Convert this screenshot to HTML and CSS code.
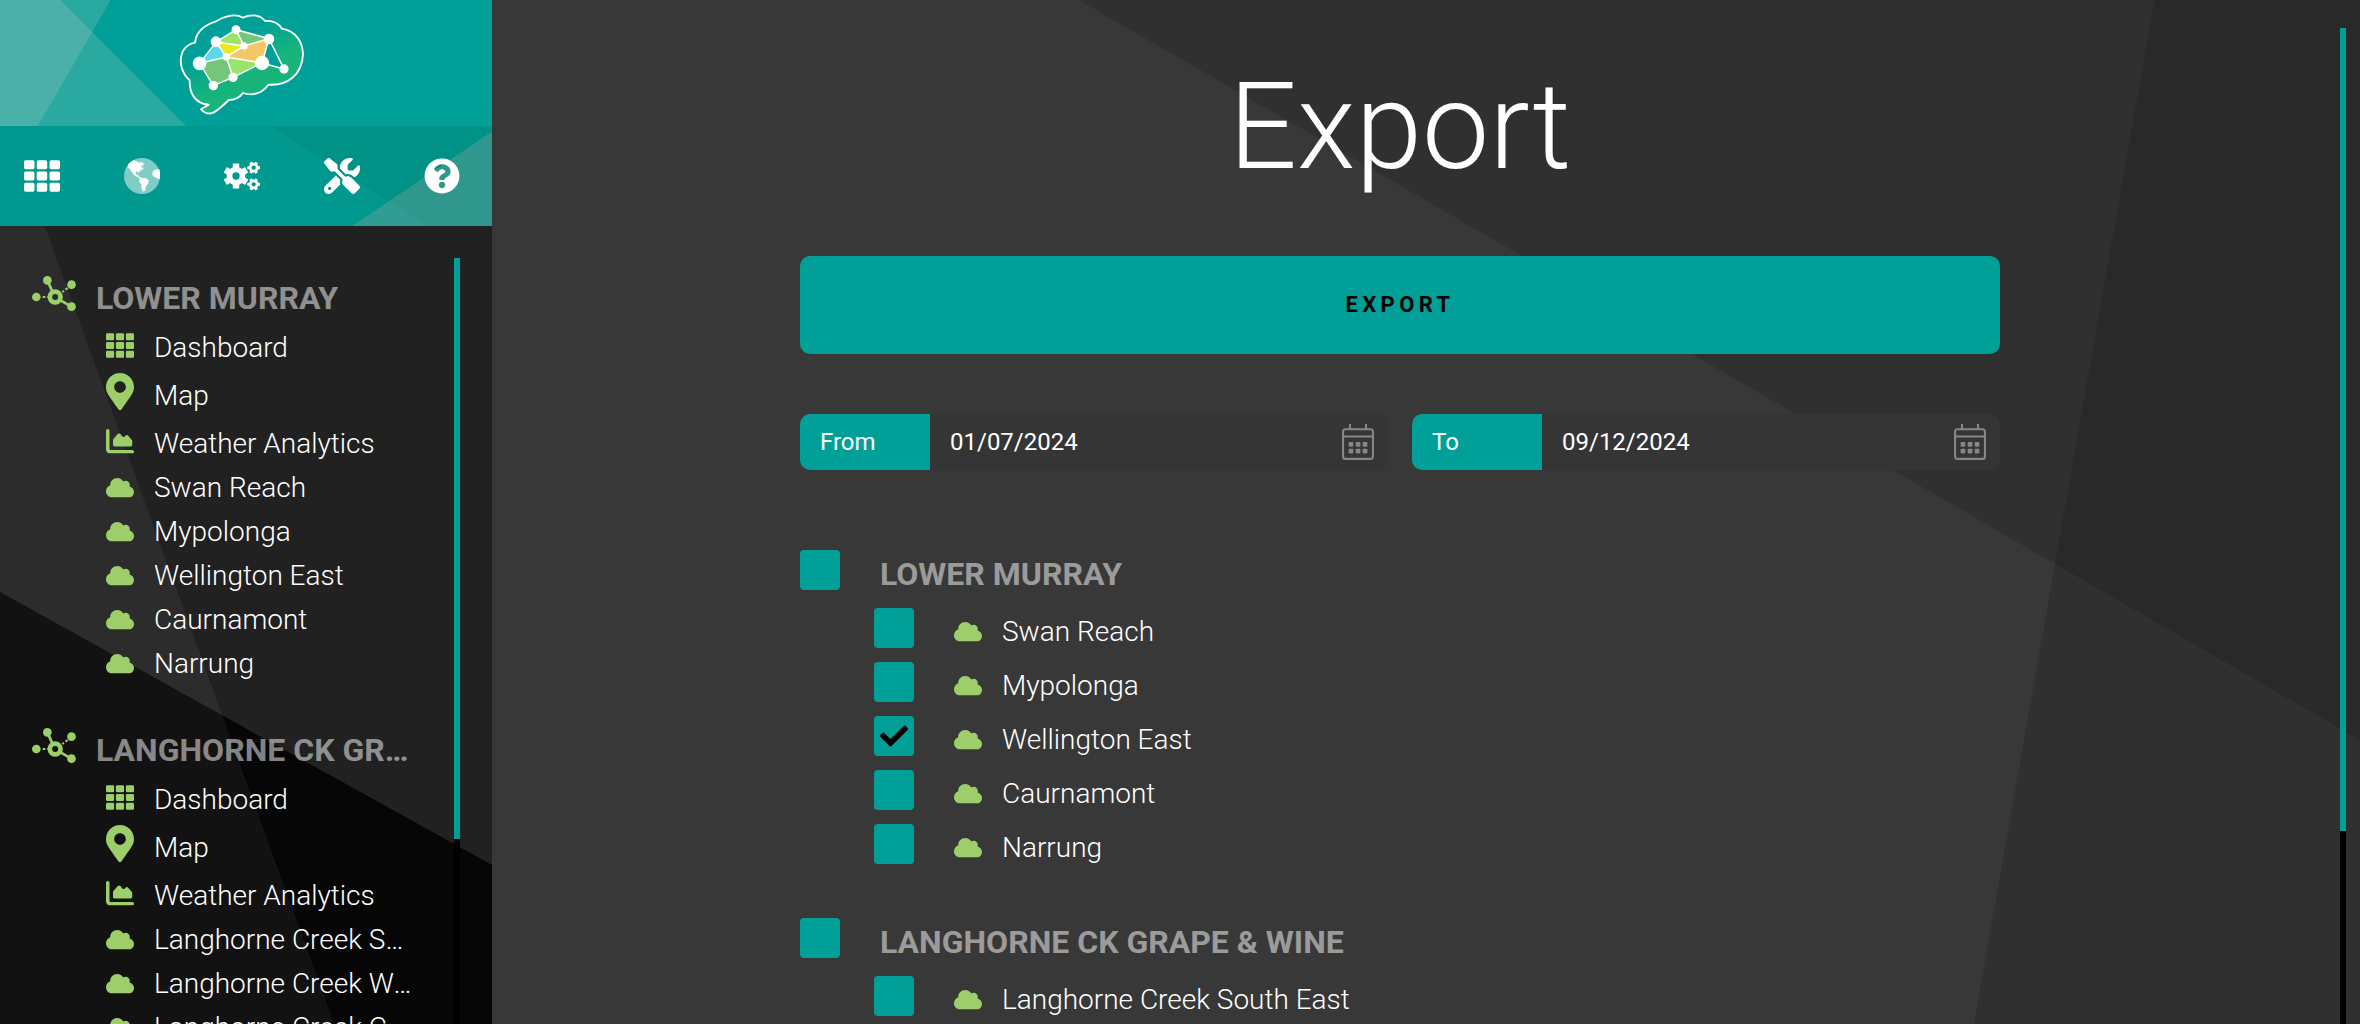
FILE: index.html
```html
<!DOCTYPE html>
<html lang="en">
<head>
<meta charset="utf-8">
<title>Export</title>
<link rel="stylesheet" href="styles.css">
</head>
<body>
<svg class="defs" aria-hidden="true">
  <symbol id="grid" viewBox="0 32 512 448"><rect x="0" y="32" width="149" height="128" rx="24"/><rect x="181" y="32" width="149" height="128" rx="24"/><rect x="363" y="32" width="149" height="128" rx="24"/><rect x="0" y="192" width="149" height="128" rx="24"/><rect x="181" y="192" width="149" height="128" rx="24"/><rect x="363" y="192" width="149" height="128" rx="24"/><rect x="0" y="352" width="149" height="128" rx="24"/><rect x="181" y="352" width="149" height="128" rx="24"/><rect x="363" y="352" width="149" height="128" rx="24"/></symbol>
  <symbol id="pin" viewBox="0 0 384 512"><path d="M172.268 501.67C26.97 291.031 0 269.413 0 192 0 85.961 85.961 0 192 0s192 85.961 192 192c0 77.413-26.97 99.031-172.268 309.67-9.535 13.774-29.93 13.773-39.464 0zM192 272c44.183 0 80-35.817 80-80s-35.817-80-80-80-80 35.817-80 80 35.817 80 80 80z"/></symbol>
  <symbol id="chart" viewBox="0 32 512 448"><path d="M64 64c0-17.700-14.300-32-32-32S0 46.300 0 64V400c0 44.200 35.800 80 80 80H480c17.700 0 32-14.300 32-32s-14.300-32-32-32H80c-8.800 0-16-7.200-16-16V64zm96 288H448c17.700 0 32-14.300 32-32V251.800c0-7.600-2.700-15-7.700-20.800l-65.800-76.800c-12.100-14.200-33.700-15-46.900-1.800l-21 21c-10 10-26.400 9.200-35.400-1.600l-39.200-47c-12.600-15.100-35.700-15.400-48.700-.6L135.900 215c-5.100 5.800-7.900 13.300-7.900 21.100v84c0 17.700 14.300 32 32 32z"/></symbol>
  <symbol id="cloud" viewBox="0 32 640 448"><path d="M0 336c0 79.500 64.500 144 144 144H512c70.700 0 128-57.300 128-128c0-61.900-44-113.600-102.400-125.400c4.100-10.700 6.400-22.400 6.400-34.600c0-53-43-96-96-96c-19.700 0-38.100 6-53.300 16.200C367 64.200 315.300 32 256 32C167.600 32 96 103.600 96 192c0 2.700 .1 5.400 .2 8.100C40.200 219.800 0 273.200 0 336z"/></symbol>
  <symbol id="check" viewBox="0 0 512 512"><path d="M173.898 439.404l-166.400-166.400c-9.997-9.997-9.997-26.206 0-36.204l36.203-36.204c9.997-9.998 26.207-9.998 36.204 0L192 312.690 432.095 72.596c9.997-9.997 26.207-9.997 36.204 0l36.203 36.204c9.997 9.997 9.997 26.206 0 36.204l-294.400 294.401c-9.998 9.997-26.207 9.997-36.204-.001z"/></symbol>
  <symbol id="hub" viewBox="96 108 132 105"><g fill="none" stroke="currentColor"><path stroke-width="8" d="M142 121L157 154M183 182L214 200"/><path stroke-width="6.500" stroke-dasharray="8 6" d="M128 171H144M203 144L187 156"/><circle cx="165.500" cy="171" r="16" stroke-width="14"/></g><circle cx="142" cy="121" r="13"/><circle cx="214.500" cy="134" r="13"/><circle cx="109" cy="171" r="13"/><circle cx="214.500" cy="200" r="13"/></symbol>
  <symbol id="calendar" viewBox="0 0 32 36"><g fill="none" stroke="currentColor" stroke-width="2.100"><rect x="1.050" y="5.300" width="29.900" height="29.600" rx="2.500"/><path d="M1 12.500H31M8 0V5M24 0V5"/></g><g id="days"><rect x="6.600" y="18" width="4.700" height="4.700" rx=".8"/><rect x="13.700" y="18" width="4.700" height="4.700" rx=".8"/><rect x="20.700" y="18" width="4.700" height="4.700" rx=".8"/></g><use href="#days" y="6.800"/></symbol>
</svg>

<div class="app">
  <aside class="sidebar">
    <header class="brand">
      <svg class="backdrop" viewBox="0 0 492 126" preserveAspectRatio="none"><path class="tint" d="M0 0H60.300L186 126H0z"/><path class="tint" d="M0 0H110.700L37.700 126H0z"/></svg>
      <svg class="logo" viewBox="537 38 378 306">
        <defs><linearGradient id="lobe" gradientUnits="userSpaceOnUse" x1="640" y1="100" x2="745" y2="290"><stop offset=".2" stop-color="#00a098"/><stop offset=".75" stop-color="#18b47c"/></linearGradient></defs>
        <path fill="url(#lobe)" stroke="#fff" stroke-width="5.500" stroke-linejoin="round" d="M585 127C588 98 606 77 646 64C671 47 706 38 729 52C756 40 783 44 795 62C816 60 835 68 846 85C888 93 908 124 909 162C906 224 862 257 805 253C786 280 756 288 729 278C719 292 704 299 686 299C671 313 655 331 637 338C625 342 611 335 603 327L626 313C586 310 568 280 569 240C545 219 535 183 548 154C556 139 568 130 585 127z"/>
        <path fill="#9be36c" d="M708 88L648 125L732 137z"/><path fill="#74c678" d="M708 88L807 115L732 137z"/><path fill="#e9e922" d="M648 125L732 137L679 170z"/><path fill="#f3c667" d="M732 137L807 115L786 188L679 170z"/><path fill="#5bd9ea" d="M648 125L679 170L599 189z"/><path fill="#74c678" d="M599 189L679 170L699 231L640 256z"/><path fill="#9be36c" d="M679 170L786 188L699 231z"/><path fill="#00a098" d="M807 115L852 206L786 188z"/>
        <path fill="none" stroke="#fff" stroke-width="4.500" d="M599 189L648 125L708 88L807 115L852 206L786 188L699 231L640 256L599 189L679 170L786 188L807 115L732 137L679 170L648 125L732 137L708 88M679 170L699 231"/>
        <g fill="#fff"><circle cx="708" cy="88" r="13.500"/><circle cx="648" cy="124" r="16"/><circle cx="807" cy="116" r="16"/><circle cx="732" cy="137" r="11"/><circle cx="679" cy="170" r="11"/><circle cx="599" cy="189" r="20.500"/><circle cx="786" cy="188" r="21.500"/><circle cx="852" cy="206" r="14"/><circle cx="699" cy="231" r="14"/><circle cx="640" cy="256" r="14"/></g>
      </svg>
    </header>
    <nav class="tools">
      <svg class="backdrop" viewBox="0 0 492 100" preserveAspectRatio="none"><path fill="#009187" d="M270 0H492V100H428z"/><path class="tint-nav" d="M492 5.500V100H352.300z"/></svg>
      <svg class="tool tool-grid"><use href="#grid"/></svg>
      <svg class="tool" viewBox="372 473 108 108"><circle cx="426" cy="527" r="54" opacity=".5"/><path d="M384 493C389 486 396 481 402 480L410 483L418 487L425 485L431 489L430 496L425 495L424 501L431 502L428 508L420 511L416 518L411 513L406 517L409 522L414 524L417 529L426 533H437L446 540L444 551L438 558L435 571L430 574L425 567L424 552L417 544L419 534L411 529L402 524L396 516L390 507L384 501zM478 507C481 517 481 527 479 537L471 534L464 530C457 528 455 518 460 511L468 507z"/></svg>
      <svg class="tool" viewBox="672 475 108 108"><g fill="none" stroke="#fff"><circle cx="708" cy="529" r="19.500" stroke-width="17"/><path stroke-width="19" stroke-linecap="butt" d="M708 506V491.500M708 552V566.500M688 517.500L676 510.500M728 517.500L740 510.500M688 540.500L676 547.500M728 540.500L740 547.500"/><g id="cog"><circle cx="761" cy="504" r="10.500" stroke-width="8"/><path stroke-width="9" d="M749 504H742M773 504H780M755 493.600L752 488M767 493.600L770 488M755 514.400L752 520M767 514.400L770 520"/></g><use href="#cog" y="50"/></g></svg>
      <svg class="tool" viewBox="0 0 512 512"><path d="M78.600 5C69.100-2.400 55.600-1.500 47 7L7 47c-8.500 8.500-9.400 22-2.100 31.600l80 104c4.500 5.900 11.600 9.400 19 9.400h54.100l109 109c-14.700 29-10 65.400 14.300 89.600l112 112c12.500 12.500 32.800 12.500 45.300 0l64-64c12.500-12.500 12.500-32.800 0-45.300l-112-112c-24.200-24.200-60.600-29-89.600-14.300l-109-109V104c0-7.500-3.500-14.500-9.400-19L78.600 5zM19.900 396.100C7.200 408.800 0 426.100 0 444.100C0 481.600 30.400 512 67.900 512c18 0 35.300-7.200 48-19.900L233.700 374.300c-7.800-20.900-9-43.600-3.600-65.100l-61.700-61.700L19.900 396.100zM512 144c0-10.500-1.100-20.700-3.200-30.500c-2.400-11.200-16.100-14.100-24.200-6l-63.900 63.900c-3 3-7.100 4.700-11.300 4.700H352c-8.800 0-16-7.200-16-16V102.600c0-4.200 1.700-8.300 4.700-11.300l63.900-63.900c8.100-8.100 5.200-21.800-6-24.200C388.700 1.100 378.500 0 368 0C288.500 0 224 64.500 224 144l0 .8 85.300 85.300c36-9.100 75.800 .5 104 28.700L429 274.500c49-23 83-72.800 83-130.500zM56 432a24 24 0 1 1 48 0 24 24 0 1 1 -48 0z"/></svg>
      <svg class="tool" viewBox="0 0 512 512"><path d="M504 256c0 136.997-111.043 248-248 248S8 392.997 8 256C8 119.083 119.043 8 256 8s248 111.083 248 248zM262.655 90c-54.497 0-89.255 22.957-116.549 63.758-3.536 5.286-2.353 12.415 2.715 16.258l34.699 26.310c5.205 3.947 12.621 3.008 16.665-2.122 17.864-22.658 30.113-35.797 57.303-35.797 20.429 0 45.698 13.148 45.698 32.958 0 14.976-12.363 22.667-32.534 33.976C247.128 238.528 216 254.941 216 296v4c0 6.627 5.373 12 12 12h56c6.627 0 12-5.373 12-12v-1.333c0-28.462 83.186-29.647 83.186-106.667 0-58.002-60.165-102-116.531-102zM256 338c-25.365 0-46 20.635-46 46 0 25.364 20.635 46 46 46s46-20.636 46-46c0-25.365-20.635-46-46-46z"/></svg>
    </nav>
    <div class="tree">
      <svg class="backdrop" viewBox="0 226 492 798" preserveAspectRatio="none"><path fill="#060606" d="M0 592L492 865V1024H0z"/><path fill="#fff" fill-opacity=".052" d="M0 226H44.700L334.300 1024H0z"/></svg>
      <div class="tree-list">
        <section class="site">
          <h2 class="site-name"><svg class="hub"><use href="#hub"/></svg><span class="label">LOWER MURRAY</span></h2>
          <a class="row row-wide"><svg class="icon icon-grid"><use href="#grid"/></svg><span class="label">Dashboard</span></a>
          <a class="row row-wide"><svg class="icon icon-pin"><use href="#pin"/></svg><span class="label">Map</span></a>
          <a class="row"><svg class="icon icon-chart"><use href="#chart"/></svg><span class="label">Weather Analytics</span></a>
          <a class="row"><svg class="icon"><use href="#cloud"/></svg><span class="label">Swan Reach</span></a>
          <a class="row"><svg class="icon"><use href="#cloud"/></svg><span class="label">Mypolonga</span></a>
          <a class="row"><svg class="icon"><use href="#cloud"/></svg><span class="label">Wellington East</span></a>
          <a class="row"><svg class="icon"><use href="#cloud"/></svg><span class="label">Caurnamont</span></a>
          <a class="row"><svg class="icon"><use href="#cloud"/></svg><span class="label">Narrung</span></a>
        </section>
        <section class="site">
          <h2 class="site-name"><svg class="hub"><use href="#hub"/></svg><span class="label">LANGHORNE CK GRAPE &amp; WINE</span></h2>
          <a class="row row-wide"><svg class="icon icon-grid"><use href="#grid"/></svg><span class="label">Dashboard</span></a>
          <a class="row row-wide"><svg class="icon icon-pin"><use href="#pin"/></svg><span class="label">Map</span></a>
          <a class="row"><svg class="icon icon-chart"><use href="#chart"/></svg><span class="label">Weather Analytics</span></a>
          <a class="row"><svg class="icon"><use href="#cloud"/></svg><span class="label">Langhorne Creek South East</span></a>
          <a class="row"><svg class="icon"><use href="#cloud"/></svg><span class="label">Langhorne Creek West</span></a>
          <a class="row"><svg class="icon"><use href="#cloud"/></svg><span class="label">Langhorne Creek Central</span></a>
        </section>
      </div>
      <div class="scrollbar tree-scroll"><div class="thumb"></div></div>
    </div>
  </aside>

  <main class="page">
    <svg class="backdrop" viewBox="492 0 1868 1024" preserveAspectRatio="none"><path class="shade" d="M1079 0H2360V740z"/><path class="shade" d="M2154.500 0H2360V1024H1974z"/></svg>
    <div class="content">
      <h1 class="title">Export</h1>
      <button class="export">EXPORT</button>
      <div class="dates">
        <div class="field"><span class="field-name">From</span><span class="field-value">01/07/2024</span><svg class="calendar"><use href="#calendar"/></svg></div>
        <div class="field"><span class="field-name">To</span><span class="field-value">09/12/2024</span><svg class="calendar"><use href="#calendar"/></svg></div>
      </div>
      <section class="group">
        <div class="group-head"><span class="box"></span><h2 class="group-name">LOWER MURRAY</h2></div>
        <div class="option"><span class="box"></span><svg class="icon"><use href="#cloud"/></svg><span class="label">Swan Reach</span></div>
        <div class="option"><span class="box"></span><svg class="icon"><use href="#cloud"/></svg><span class="label">Mypolonga</span></div>
        <div class="option"><span class="box"><svg class="check"><use href="#check"/></svg></span><svg class="icon"><use href="#cloud"/></svg><span class="label">Wellington East</span></div>
        <div class="option"><span class="box"></span><svg class="icon"><use href="#cloud"/></svg><span class="label">Caurnamont</span></div>
        <div class="option"><span class="box"></span><svg class="icon"><use href="#cloud"/></svg><span class="label">Narrung</span></div>
      </section>
      <section class="group">
        <div class="group-head"><span class="box"></span><h2 class="group-name">LANGHORNE CK GRAPE &amp; WINE</h2></div>
        <div class="option"><span class="box"></span><svg class="icon"><use href="#cloud"/></svg><span class="label">Langhorne Creek South East</span></div>
      </section>
    </div>
    <div class="scrollbar page-scroll"><div class="thumb"></div></div>
  </main>
</div>
</body>
</html>
```
FILE: styles.css
```css
* { box-sizing: border-box; }
body { margin: 0; background: #383838; color: #fff; font-family: Roboto, "Liberation Sans", sans-serif; font-weight: 300; font-size: 28px; overflow: hidden; }
h1, h2 { margin: 0; }
svg { display: block; flex: none; fill: currentColor; }
.defs { position: absolute; width: 0; height: 0; }
.app { display: flex; height: 1024px; overflow: hidden; }
.backdrop { position: absolute; inset: 0; width: 100%; height: 100%; z-index: -1; }

.sidebar { width: 492px; flex: none; display: flex; flex-direction: column; }
.brand, .tools, .tree, .page { position: relative; isolation: isolate; }
.brand { height: 126px; flex: none; background: #00a098; padding: 13px 0 0 179px; }
.tint { fill: #d4cdc6; fill-opacity: .2; }
.tint-nav { fill: #e4b0a6; fill-opacity: .21; }
.logo { width: 126px; height: 102px; }
.tools { height: 100px; flex: none; background: #00988f; display: flex; align-items: center; gap: 64px; padding-left: 24px; }
.tool { width: 36px; height: 36px; }
.tool-grid { height: 32px; }

.tree { flex: 1; min-height: 0; background: #212121; display: flex; align-items: flex-start; justify-content: space-between; padding: 32px 32px 0 32px; overflow: hidden; }
.tree-list { width: 380px; padding-top: 14px; }
.site { margin-bottom: 38px; }
.site-name { display: flex; align-items: center; gap: 20px; height: 53px; line-height: 50px; font-size: 32px; font-weight: 700; margin-bottom: 1px; }
.hub { width: 44px; height: 35px; color: #9ccf6a; margin-top: -10px; }
.label { overflow: hidden; text-overflow: ellipsis; white-space: nowrap; }
.row { display: flex; align-items: center; gap: 20px; height: 44px; line-height: 44px; padding-left: 74px; }
.row-wide { margin-bottom: 4px; }
.site .label { width: 316px; }
.site-name .label { color: rgba(255, 255, 255, .5); margin-top: -1px; }
.icon { width: 28px; height: 19.600px; color: #9ccf6a; }
.icon-grid { height: 25px; margin-top: -5px; }
.icon-pin { height: 37.300px; margin-top: -8px; }
.icon-chart { height: 24.500px; margin-top: -5px; }

.scrollbar { width: 6px; background: #000; }
.scrollbar .thumb { background: #00a098; }
.tree-scroll { height: 766px; }
.tree-scroll .thumb { height: 581px; }

.page { flex: 1; background: #383838; display: flex; justify-content: space-between; padding: 28px 14px 0 308px; overflow: hidden; }
.shade { fill: #000; fill-opacity: .14; }
.content { width: 1200px; }
.title { height: 228px; line-height: 198px; text-align: center; font-size: 120px; font-weight: 300; }
.export { display: block; width: 100%; height: 98px; border: 0; border-radius: 10px; background: #00a098; color: #000; font: 700 22px Roboto, sans-serif; letter-spacing: 4.400px; padding: 0 0 2px; }
.dates { display: flex; gap: 24px; margin-top: 60px; }
.field { flex: 1; height: 56px; display: flex; align-items: center; background: #353535; border-radius: 10px; overflow: hidden; font-size: 24px; font-weight: 400; line-height: 56px; padding-right: 14px; }
.field-name { width: 130px; background: #00a098; padding-left: 20px; }
.field-value { flex: 1; padding-left: 20px; }
.calendar { width: 32px; height: 36px; color: #868686; }
.group { margin-top: 80px; }
.group + .group { margin-top: 40px; }
.group-head { display: flex; height: 58px; gap: 40px; }
.group-name { font-size: 32px; font-weight: 700; line-height: 48px; color: rgba(255, 255, 255, .5); }
.box { width: 40px; height: 40px; flex: none; border-radius: 4px; background: #00a098; color: #000; display: flex; align-items: center; justify-content: center; }
.check { width: 28px; height: 28px; }
.option { display: flex; height: 54px; padding-left: 74px; line-height: 47px; }
.option .icon { margin: 14px 20px 0 40px; }
.page-scroll { height: 996px; }
.page-scroll .thumb { height: 803px; }
```
